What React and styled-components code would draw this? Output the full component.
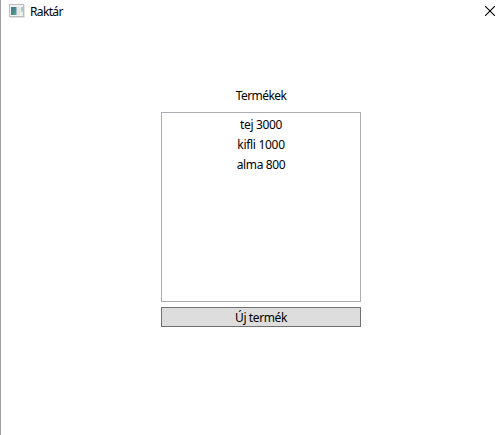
import React from "react";
import styled, { createGlobalStyle } from "styled-components";

const GlobalStyle = createGlobalStyle`
  * { box-sizing: border-box; }
  body { margin: 0; background: #fff; overflow: hidden; }
`;

const Window = styled.div`
  width: 503px;
  height: 435px;
  display: flex;
  flex-direction: column;
  background: #fff;
  border-left: 1px solid #a0a0a0;
  color: #000;
  font: 12px/16px "Noto Sans", "Open Sans", sans-serif;
`;

const TitleBar = styled.header`
  display: flex;
  align-items: flex-start;
  height: 30px;
  padding: 4px 8px 0 8px;
`;

const Title = styled.span`
  flex: 1;
  margin-left: 5px;
  letter-spacing: ${(p) => p.$spacing}px;
`;

const CloseButton = styled.button`
  display: flex;
  margin: 2px 0 0;
  padding: 0;
  border: 0;
  background: none;
`;

const Content = styled.main`
  display: flex;
  flex-direction: column;
  align-items: center;
  width: 200px;
  margin: 58px 0 0 160px;
`;

const Label = styled.span`
  height: 24px;
  letter-spacing: ${(p) => p.$spacing}px;
`;

const ProductList = styled.ul`
  width: 200px;
  height: 190px;
  margin: 0;
  padding: 2px 0 0;
  list-style: none;
  border: 1px solid #abadb3;
  background: #fff;
`;

const ProductItem = styled.li`
  height: 20px;
  padding-top: 2px;
  text-align: center;
  letter-spacing: ${(p) => p.$spacing}px;
`;

const AddButton = styled.button`
  width: 200px;
  height: 20px;
  margin-top: 5px;
  padding: 1px 0 0;
  border: 1px solid #707070;
  background: #ddd;
  color: #000;
  font: inherit;
  line-height: 16px;
  letter-spacing: ${(p) => p.$spacing}px;
`;

const AppIcon = () => (
  <svg width="16" height="15" viewBox="0 0 16 15">
    <defs>
      <linearGradient id="screen" x1="0" y1="0" x2="1" y2="1">
        <stop offset="0" stopColor="#4678a8" />
        <stop offset=".5" stopColor="#3f888c" />
        <stop offset="1" stopColor="#68ae78" />
      </linearGradient>
    </defs>
    <rect x=".5" y=".5" width="14" height="12" fill="#f2f2f2" stroke="#bcbcbc" />
    <path d="M1 13.5h15M15.5 1v13" stroke="#e2e2e2" />
    <rect x="2" y="3" width="5" height="8" fill="url(#screen)" />
    <rect x="7" y="3" width="1" height="8" fill="#a3bfc4" />
    <rect x="8" y="3" width="3" height="8" fill="#e2e4e6" />
    <rect x="12" y="3" width="2" height="3" fill="#a9c2d4" />
    <rect x="12" y="6" width="2" height="2" fill="#b3d6b4" />
    <rect x="12" y="8" width="2" height="3" fill="#eceeec" />
  </svg>
);

const CloseIcon = () => (
  <svg width="10" height="10" viewBox="0 0 10 10">
    <path d="M0 0L10 10M10 0L0 10" stroke="#000" strokeWidth="1.1" />
  </svg>
);

const products = [
  { name: "tej", price: 3000, spacing: -0.35 },
  { name: "kifli", price: 1000, spacing: -0.3 },
  { name: "alma", price: 800, spacing: -0.35 },
];

export default function App() {
  return (
    <>
      <GlobalStyle />
      <Window>
        <TitleBar>
          <AppIcon />
          <Title $spacing={-0.65}>Raktár</Title>
          <CloseButton aria-label="Bezárás"><CloseIcon /></CloseButton>
        </TitleBar>
        <Content>
          <Label $spacing={-0.55}>Termékek</Label>
          <ProductList>
            {products.map((p) => (
              <ProductItem key={p.name} $spacing={p.spacing}>{p.name} {p.price}</ProductItem>
            ))}
          </ProductList>
          <AddButton $spacing={-0.4}>Új termék</AddButton>
        </Content>
      </Window>
    </>
  );
}
